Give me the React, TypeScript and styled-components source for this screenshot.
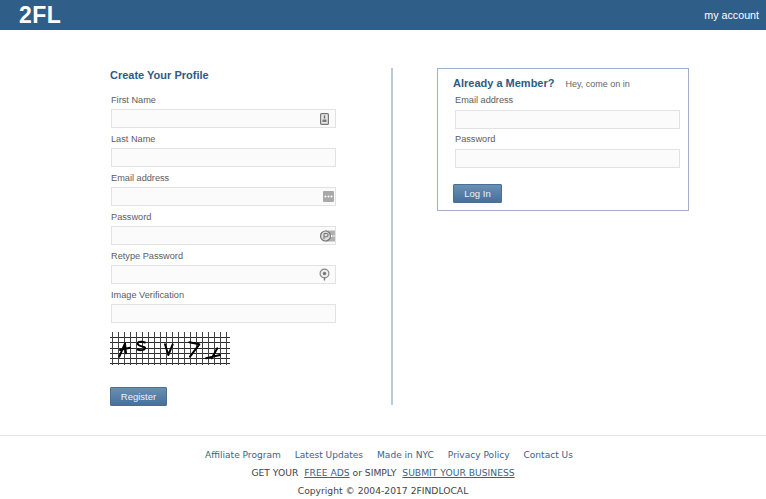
import styled, { createGlobalStyle } from "styled-components";

const GlobalStyle = createGlobalStyle`
	html, body {
		margin: 0;
		padding: 0;
		background: #fff;
		font-family: "Liberation Sans", Arial, sans-serif;
	}
`;

const Page = styled.div`
	width: 766px;
	height: 499px;
	overflow: hidden;
	display: flex;
	flex-direction: column;
`;

const Header = styled.header`
	height: 30px;
	flex: none;
	background: #2f5f88;
	display: flex;
	align-items: center;
	justify-content: space-between;
	padding: 0 7px 0 19px;
	color: #fff;
`;

const Logo = styled.div`
	font-size: 23px;
	font-weight: 700;
	letter-spacing: 0.4px;
`;

const Account = styled.a`
	font-size: 10.7px;
`;

const Main = styled.main`
	height: 405px;
	flex: none;
	display: flex;
	align-items: flex-start;
	padding: 38px 0 0 110px;
	box-sizing: border-box;
`;

const SignupColumn = styled.section`
	width: 283px;
	height: 337px;
	box-sizing: border-box;
	border-right: 2px solid #b9c8da;
`;

const Heading = styled.h2`
	margin: 0;
	padding-top: 1px;
	font-size: 11px;
	line-height: 13px;
	font-weight: 700;
	color: #2f5a85;
`;

const Form = styled.div`
	display: flex;
	flex-direction: column;
	margin: 7px 0 0 1px;
`;

const Label = styled.label`
	display: block;
	height: 20px;
	box-sizing: border-box;
	padding-top: 2px;
	font-size: 9.2px;
	line-height: 18px;
	color: #5c5c5c;
`;

const LoginLabel = styled(Label)`
	padding-top: 1px;
`;

const InputBox = styled.div`
	position: relative;
	width: 225px;
	height: 19px;
	box-sizing: border-box;
	border: 1px solid #e2e2e2;
	background: #fbfbfb;
`;

const FieldIcon = styled.span<{ $right: number }>`
	position: absolute;
	top: 0;
	right: ${(p) => p.$right}px;
	height: 17px;
	display: flex;
	align-items: center;
`;

const Captcha = styled.svg`
	display: block;
	margin: 9px 0 0 -1px;
`;

const Button = styled.button`
	display: block;
	height: 19px;
	padding: 0;
	border: 1px solid #4a6f95;
	border-radius: 1px;
	background: linear-gradient(#6b8fb3, #46709a);
	color: #eef3f8;
	font-family: "Liberation Sans", Arial, sans-serif;
	font-size: 9.5px;
`;

const RegisterButton = styled(Button)`
	width: 57px;
	margin: 22px 0 0 -1px;
`;

const LoginButton = styled(Button)`
	width: 49px;
	margin: 16px 0 0 -2px;
`;

const LoginBox = styled.section`
	width: 252px;
	height: 143px;
	margin-left: 44px;
	box-sizing: border-box;
	border: 1px solid #9fb0c9;
	padding: 6px 0 0 15px;
`;

const LoginHead = styled.div`
	display: flex;
	align-items: center;
	gap: 11px;
`;

const LoginTitle = styled.h3`
	margin: 0;
	font-size: 11px;
	line-height: 16px;
	font-weight: 700;
	color: #2f5a85;
`;

const LoginHint = styled.span`
	margin-top: 2px;
	font-size: 9px;
	color: #666;
`;

const LoginForm = styled.div`
	display: flex;
	flex-direction: column;
	align-items: flex-start;
	margin: -1px 0 0 2px;
`;

const Footer = styled.footer`
	border-top: 1px solid #e6e6e6;
	padding-top: 13px;
	flex: 1;
	display: flex;
	flex-direction: column;
	align-items: center;
	font-family: "DejaVu Sans", Verdana, sans-serif;
	font-size: 9.2px;
	color: #444;
`;

const FooterLinks = styled.nav`
	height: 13px;
	line-height: 13px;
	display: flex;
	gap: 14px;
	padding-left: 12px;
	font-size: 9.05px;
	color: #3e5f8a;
`;

const FooterLine = styled.div`
	height: 17px;
	margin-top: 2px;
	line-height: 17px;
	& + & {
		margin-top: 1px;
	}
`;

const Highlight = styled.a`
	color: #3e5f8a;
	text-decoration: underline;
	margin: 0 0 0 3px;
`;

function IdIcon() {
	return (
		<svg width="9" height="12" viewBox="0 0 9 12">
			<rect x="0.6" y="0.6" width="7.8" height="10.8" rx="1" fill="#e8e8e8" stroke="#777" strokeWidth="1.2" />
			<rect x="3.8" y="2.5" width="1.4" height="3" fill="#666" />
			<rect x="2.5" y="6.5" width="4" height="2.5" fill="#777" />
		</svg>
	);
}

function DotsIcon() {
	return (
		<svg width="11" height="11" viewBox="0 0 11 11">
			<rect width="11" height="11" rx="1" fill="#a9a9a9" />
			<circle cx="2.5" cy="5.5" r="1" fill="#fff" />
			<circle cx="5.5" cy="5.5" r="1" fill="#fff" />
			<circle cx="8.5" cy="5.5" r="1" fill="#fff" />
		</svg>
	);
}

function KeyIcon() {
	return (
		<svg width="15" height="14" viewBox="0 0 15 14">
			<rect x="5" y="1.5" width="10" height="11" fill="#b0b0b0" />
			<circle cx="5.5" cy="7" r="5" fill="#ddd" stroke="#777" strokeWidth="1.2" />
			<path d="M4 4.5 V10 M4 4.5 H6.5 A1.6 1.6 0 0 1 6.5 7.7 H4" fill="none" stroke="#777" strokeWidth="1.1" />
			<circle cx="11.6" cy="7" r="0.9" fill="#fff" />
			<circle cx="14" cy="7" r="0.8" fill="#fff" />
		</svg>
	);
}

function PinIcon() {
	return (
		<svg width="11" height="13" viewBox="0 0 11 13">
			<circle cx="5.5" cy="5.5" r="4.4" fill="#eee" stroke="#888" strokeWidth="1.2" />
			<circle cx="5.5" cy="5.5" r="1.7" fill="#777" />
			<path d="M5.5 9.5 V12.5" stroke="#777" strokeWidth="1.4" />
		</svg>
	);
}

const hLines = [337, 342, 348, 353, 358, 363];
const vLines = Array.from({ length: 20 }, (_, i) => 112.5 + i * 6);

function CaptchaImage() {
	return (
		<Captcha width="120" height="33" viewBox="110 332 120 33">
			{hLines.map((y) => (
				<line key={y} x1="110" x2="230" y1={y + 0.5} y2={y + 0.5} stroke="#2a2a2a" strokeWidth="1" />
			))}
			{vLines.map((x) => (
				<line key={x} x1={x} x2={x} y1="332" y2="365" stroke="#444" strokeWidth="1" />
			))}
			<g fill="none" stroke="#000" strokeWidth="2" strokeLinecap="round" strokeLinejoin="round">
				<path d="M119.3 356.7 L125 343.3 L126 353.3 M120 350 L130 347.7" />
				<path d="M145 342.5 C140 340.5 136.5 342.5 138 344.5 C139.5 346.5 146 346.5 145 348.5 C144 350.5 140 350.5 137.5 349.5" />
				<path d="M165 344.3 L168.3 355 L172.7 344.3" />
				<path d="M189.3 342.3 L199.3 344.3 L190 356.7" />
				<path d="M206 358.3 L220 355 M217.3 348.3 L211.7 358.3" />
			</g>
		</Captcha>
	);
}

export default function App() {
	return (
		<Page>
			<GlobalStyle />
			<Header>
				<Logo>2FL</Logo>
				<Account>my account</Account>
			</Header>
			<Main>
				<SignupColumn>
					<Heading>Create Your Profile</Heading>
					<Form>
						<Label>First Name</Label>
						<InputBox>
							<FieldIcon $right={6}>
								<IdIcon />
							</FieldIcon>
						</InputBox>
						<Label>Last Name</Label>
						<InputBox />
						<Label>Email address</Label>
						<InputBox>
							<FieldIcon $right={1}>
								<DotsIcon />
							</FieldIcon>
						</InputBox>
						<Label>Password</Label>
						<InputBox>
							<FieldIcon $right={0}>
								<KeyIcon />
							</FieldIcon>
						</InputBox>
						<Label>Retype Password</Label>
						<InputBox>
							<FieldIcon $right={5}>
								<PinIcon />
							</FieldIcon>
						</InputBox>
						<Label>Image Verification</Label>
						<InputBox />
						<CaptchaImage />
						<RegisterButton>Register</RegisterButton>
					</Form>
				</SignupColumn>
				<LoginBox>
					<LoginHead>
						<LoginTitle>Already a Member?</LoginTitle>
						<LoginHint>Hey, come on in</LoginHint>
					</LoginHead>
					<LoginForm>
						<LoginLabel>Email address</LoginLabel>
						<InputBox />
						<LoginLabel>Password</LoginLabel>
						<InputBox />
						<LoginButton>Log In</LoginButton>
					</LoginForm>
				</LoginBox>
			</Main>
			<Footer>
				<FooterLinks>
					<a>Affiliate Program</a>
					<a>Latest Updates</a>
					<a>Made in NYC</a>
					<a>Privacy Policy</a>
					<a>Contact Us</a>
				</FooterLinks>
				<FooterLine>
					GET YOUR <Highlight>FREE ADS</Highlight> or SIMPLY <Highlight>SUBMIT YOUR BUSINESS</Highlight>
				</FooterLine>
				<FooterLine>Copyright © 2004-2017 2FINDLOCAL</FooterLine>
			</Footer>
		</Page>
	);
}
